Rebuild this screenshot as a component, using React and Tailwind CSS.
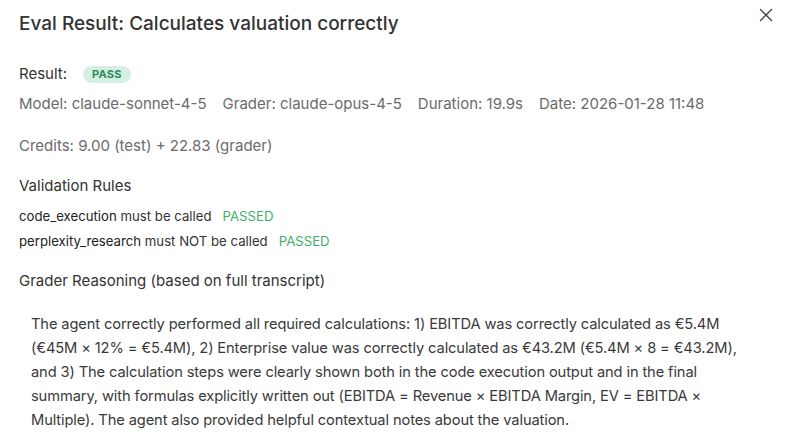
import React from "react";

const rules = [
  { tool: "code_execution", text: "must be called", status: "PASSED" },
  { tool: "perplexity_research", text: "must NOT be called", status: "PASSED" },
];

const reasoning = [
  "The agent correctly performed all required calculations: 1) EBITDA was correctly calculated as €5.4M",
  "(€45M × 12% = €5.4M), 2) Enterprise value was correctly calculated as €43.2M (€5.4M × 8 = €43.2M),",
  "and 3) The calculation steps were clearly shown both in the code execution output and in the final",
  "summary, with formulas explicitly written out (EBITDA = Revenue × EBITDA Margin, EV = EBITDA ×",
  "Multiple). The agent also provided helpful contextual notes about the valuation.",
];

const App = () => {
  return (
    <div
      className="w-[786px] h-[439px] bg-white overflow-hidden relative"
      style={{ fontFamily: "Inter, 'Noto Sans', sans-serif" }}
    >
      <button className="absolute right-[11px] top-[6px] w-[18px] h-[18px] flex items-center justify-center text-[#444]">
        <svg width="14" height="14" viewBox="0 0 14 14" fill="none" stroke="currentColor" strokeWidth="1.4" strokeLinecap="round">
          <path d="M1.5 1.5 L12.5 12.5 M12.5 1.5 L1.5 12.5" />
        </svg>
      </button>
      <div className="px-[19px] pt-[12px]">
        <h2 className="text-[19px] leading-[24px] font-medium text-[#333]">
          Eval Result: Calculates valuation correctly
        </h2>

        <div className="mt-[27px] flex items-center gap-[16px] text-[15px] leading-[22px] text-[#333]">
          <span>Result:</span>
          <span className="rounded-full bg-[#d6efe3] text-[#2e8b57] text-[11px] font-bold tracking-wide px-[9px] h-[17px] flex items-center">
            PASS
          </span>
        </div>

        <div className="mt-[8px] flex gap-[16px] text-[15px] leading-[22px] text-[#6b6b6b]">
          <span>Model: claude-sonnet-4-5</span>
          <span>Grader: claude-opus-4-5</span>
          <span>Duration: 19.9s</span>
          <span>Date: 2026-01-28 11:48</span>
        </div>

        <div className="mt-[20px] text-[15px] leading-[22px] text-[#6b6b6b]">
          Credits: 9.00 (test) + 22.83 (grader)
        </div>

        <h3 className="mt-[18px] text-[15px] leading-[22px] text-[#333]">Validation Rules</h3>
        <div className="mt-[10px] flex flex-col gap-[6px] text-[13.2px] leading-[19px] text-[#333]">
          {rules.map((r, i) => (
            <div key={i}>
              <span className="text-[#222]">{r.tool}</span> {r.text}
              <span className="ml-[11px] text-[#3fae6c]">{r.status}</span>
            </div>
          ))}
        </div>

        <h3 className="mt-[19px] text-[15px] leading-[22px] text-[#333]">
          Grader Reasoning (based on full transcript)
        </h3>
        <p className="mt-[20px] pl-[12px] text-[14.7px] leading-[24px] tracking-[-0.13px] text-[#3a3a3a] whitespace-nowrap">
          {reasoning.map((line, i) => (
            <span key={i} className="block">
              {line}
            </span>
          ))}
        </p>
      </div>
    </div>
  );
};

export default App;
